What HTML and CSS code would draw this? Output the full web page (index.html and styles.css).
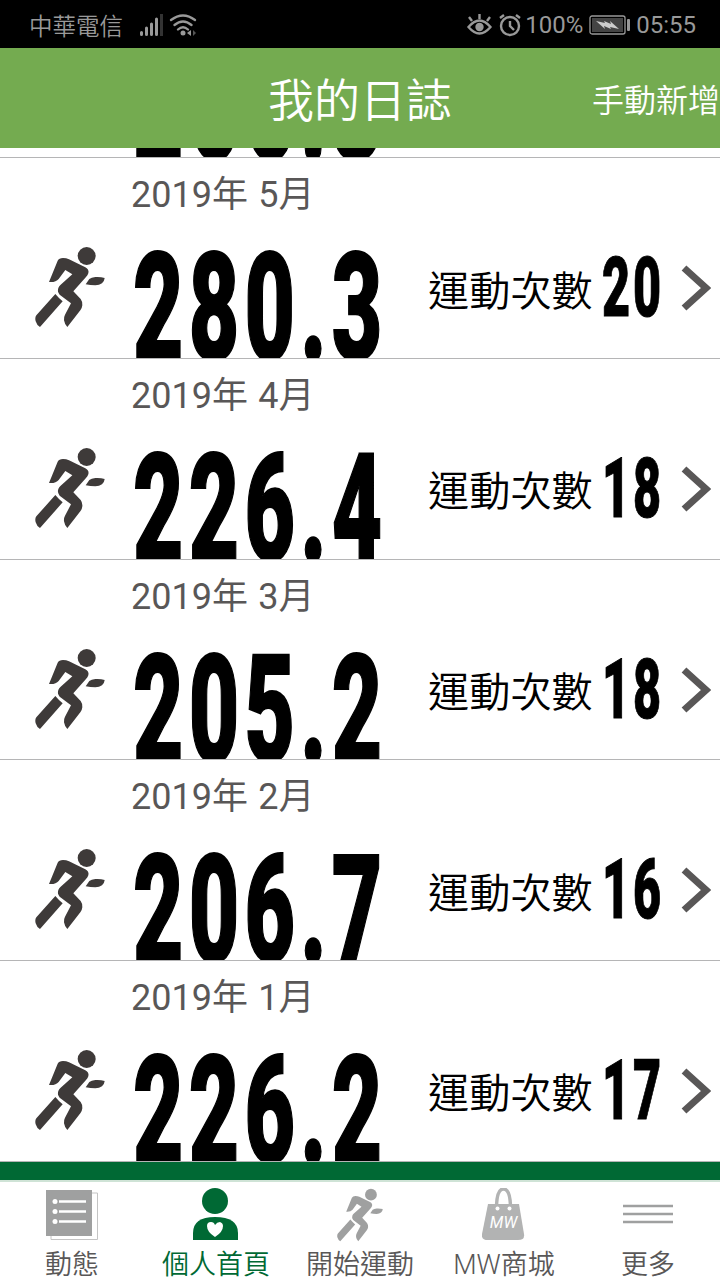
FILE: index.html
```html
<!DOCTYPE html>
<html lang="zh-Hant">
<head>
    <meta charset="UTF-8">
    <meta name="viewport" content="width=device-width, initial-scale=1.0">
    <title>我的日誌</title>
    <link rel="stylesheet" href="styles.css">
</head>
<body>
    <svg class="symbols" aria-hidden="true">
        <symbol id="runner" viewBox="45 36 210 240">
            <circle cx="200" cy="63" r="27"/>
            <path d="M113 77Q117 69 129 69Q139 69 147 73L196 97Q208 103 205 115Q203 121 198 126L160 169L182 192Q188 200 187 211Q186 220 181 226L142 276Q134 268 132 256Q131 246 135 239L153 205L119 179Q111 170 115 159Q117 153 122 149L157 118L136 105L116 132Q107 143 87 141Z"/>
            <path d="M106 177Q115 188 128 199L60 276Q50 270 47 259Q44 248 49 241Z"/>
            <path d="M197 148L208 132Q214 127 226 126Q242 125 254 129Q253 139 246 145Q238 151 226 151Q211 151 197 148Z"/>
        </symbol>
        <symbol id="chevron" viewBox="0 0 30 46">
            <path d="M3 3L25 23L3 43" fill="none" stroke="currentColor" stroke-width="7"/>
        </symbol>
    </svg>

    <div class="status-bar">
        <span class="carrier">中華電信</span>
        <svg class="signal" width="24" height="24" viewBox="0 0 24 24">
            <path d="M2.500 21.500V19.500M7.500 21.500V15M12.500 21.500V11M17.500 21.500V6" stroke="#999" stroke-width="3" stroke-linecap="round"/>
            <path d="M22.500 23V1" stroke="#333" stroke-width="3"/>
        </svg>
        <svg class="wifi" width="28" height="24" viewBox="0 0 28 24">
            <path d="M2 7Q14 -2 26 7M5.500 12Q14 5 22.500 12M9 16.500Q14 12 19 16.500" fill="none" stroke="#999" stroke-width="2.300" stroke-linecap="round"/>
            <circle cx="14" cy="20" r="2.500" fill="#999"/>
            <path d="M18 20L22 17V23Z" fill="#999"/>
            <path d="M24 17L27 20L24 23Z" fill="#555"/>
        </svg>
        <div class="status-right">
            <svg width="25" height="24" viewBox="0 0 25 24">
                <path d="M1.500 14Q12.500 1 23.500 14Q12.500 27 1.500 14ZM12.500 6V1M5 8L2 4M20 8L23 4" fill="none" stroke="#999" stroke-width="2.400"/>
                <circle cx="12.500" cy="14" r="4.200" fill="#999"/>
            </svg>
            <svg class="alarm" width="24" height="24" viewBox="0 0 24 24">
                <circle cx="12" cy="13" r="9" fill="none" stroke="#999" stroke-width="2.400"/>
                <path d="M12 8V13L16 17M2 5L6 2M22 5L18 2" fill="none" stroke="#999" stroke-width="2.400"/>
            </svg>
            <span class="percent">100%</span>
            <svg class="battery" width="42" height="20" viewBox="0 0 42 20">
                <rect x="1" y="1" width="35" height="18" rx="2" fill="#000" stroke="#999" stroke-width="1.300"/>
                <rect x="3" y="3" width="31" height="14" fill="#444"/>
                <path d="M7 6L16 8L15 6L22 9L21 6L30 14L21 12L22 14L15 11L16 14Z" fill="#ccc"/>
                <rect x="38" y="4" width="3" height="12" rx="1" fill="#999"/>
            </svg>
            <span>05:55</span>
        </div>
    </div>

    <header class="header">
        <h1>我的日誌</h1>
        <span class="add">手動新增</span>
    </header>

    <main class="list">
        <div class="row">
            <div class="month">2019年 6月</div>
            <svg class="runner"><use href="#runner"/></svg>
            <div class="distance"><span class="narrow">266.3</span></div>
            <div class="times">
                <span class="label">運動次數</span>
                <div class="count"><span class="narrow">19</span></div>
                <svg class="chevron"><use href="#chevron"/></svg>
            </div>
        </div>
        <div class="row">
            <div class="month">2019年 5月</div>
            <svg class="runner"><use href="#runner"/></svg>
            <div class="distance"><span class="narrow">280.3</span></div>
            <div class="times">
                <span class="label">運動次數</span>
                <div class="count"><span class="narrow">20</span></div>
                <svg class="chevron"><use href="#chevron"/></svg>
            </div>
        </div>
        <div class="row">
            <div class="month">2019年 4月</div>
            <svg class="runner"><use href="#runner"/></svg>
            <div class="distance"><span class="narrow">226.4</span></div>
            <div class="times">
                <span class="label">運動次數</span>
                <div class="count"><span class="narrow">18</span></div>
                <svg class="chevron"><use href="#chevron"/></svg>
            </div>
        </div>
        <div class="row">
            <div class="month">2019年 3月</div>
            <svg class="runner"><use href="#runner"/></svg>
            <div class="distance"><span class="narrow">205.2</span></div>
            <div class="times">
                <span class="label">運動次數</span>
                <div class="count"><span class="narrow">18</span></div>
                <svg class="chevron"><use href="#chevron"/></svg>
            </div>
        </div>
        <div class="row">
            <div class="month">2019年 2月</div>
            <svg class="runner"><use href="#runner"/></svg>
            <div class="distance"><span class="narrow">206.7</span></div>
            <div class="times">
                <span class="label">運動次數</span>
                <div class="count"><span class="narrow">16</span></div>
                <svg class="chevron"><use href="#chevron"/></svg>
            </div>
        </div>
        <div class="row">
            <div class="month">2019年 1月</div>
            <svg class="runner"><use href="#runner"/></svg>
            <div class="distance"><span class="narrow">226.2</span></div>
            <div class="times">
                <span class="label">運動次數</span>
                <div class="count"><span class="narrow">17</span></div>
                <svg class="chevron"><use href="#chevron"/></svg>
            </div>
        </div>
    </main>

    <div class="strip"></div>

    <nav class="tabs">
        <div class="tab">
            <svg width="54" height="54" viewBox="0 0 54 54">
                <path d="M6 5H52.500V51.500H6Z" fill="#fff" stroke="#c4c4c4"/>
                <rect x="1" y="2" width="46" height="46" fill="#9fa0a0"/>
                <path d="M14 13.500H41M14 23.500H41M14 33.500H41" stroke="#fff" stroke-width="2.500"/>
                <circle cx="10" cy="13.500" r="2.500" fill="#fff"/>
                <circle cx="10" cy="23.500" r="2.500" fill="#fff"/>
                <circle cx="10" cy="33.500" r="2.500" fill="#fff"/>
            </svg>
            <span>動態</span>
        </div>
        <div class="tab active">
            <svg width="48" height="54" viewBox="0 0 48 54">
                <circle cx="23" cy="13" r="13"/>
                <path d="M1 52V45Q1 29 23 29Q46 29 46 45V52Z"/>
                <path d="M23 49Q15 44 15 38Q15 34 19 34Q22 34 23 37Q25 34 28 34Q31 35 31 38Q31 44 23 49Z" fill="#fff"/>
            </svg>
            <span>個人首頁</span>
        </div>
        <div class="tab">
            <svg class="tab-runner"><use href="#runner"/></svg>
            <span>開始運動</span>
        </div>
        <div class="tab">
            <svg width="44" height="54" viewBox="0 0 44 54">
                <path d="M14.500 18Q15 1 21.500 1Q28 1 28.500 18" fill="none" stroke="#b2b3b3" stroke-width="3.500"/>
                <path d="M6 16H37L42 46Q43 52 36 52H6Q-1 52 0 46Z" fill="#b2b3b3"/>
                <circle cx="15.500" cy="20.500" r="2" fill="#fff"/>
                <circle cx="27.500" cy="20.500" r="2" fill="#fff"/>
                <text class="bag-text" x="21.500" y="39.500" text-anchor="middle">MW</text>
            </svg>
            <span>MW商城</span>
        </div>
        <div class="tab">
            <svg width="52" height="54" viewBox="0 0 52 54">
                <path d="M1 18H51M1 26H51M1 34H51" stroke="#9fa0a0" stroke-width="2.300"/>
            </svg>
            <span>更多</span>
        </div>
    </nav>
</body>
</html>
```
FILE: styles.css
```css
:root {
    --green: #74ab50;
    --dark-green: #006934;
    --gray: #595757;
    --icon: #9fa0a0;
}

* {
    box-sizing: border-box;
}

body {
    margin: 0;
    width: 720px;
    height: 1280px;
    overflow: hidden;
    display: flex;
    flex-direction: column;
    background: #fff;
    font-family: Roboto, "Noto Sans CJK TC", sans-serif;
    font-weight: 350;
}

svg {
    display: block;
    flex: none;
}

.symbols {
    display: none;
}

.status-bar {
    flex: none;
    height: 48px;
    padding: 2px 24px 0 29px;
    display: flex;
    align-items: center;
    background: #000;
    color: #999;
    font-size: 24px;
    font-weight: 400;
}

.carrier {
    font-size: 23.5px;
    font-weight: 350;
}

.signal {
    margin-left: 16px;
}

.wifi {
    margin-left: 6px;
}

.status-right {
    margin-left: auto;
    display: flex;
    align-items: center;
}

.alarm {
    margin-left: 6px;
}

.percent {
    margin-left: 3px;
}

.battery {
    margin: 0 5px 0 6px;
}

.header {
    flex: none;
    height: 100px;
    padding-top: 6px;
    display: grid;
    grid-template-columns: 1fr auto 1fr;
    align-items: center;
    background: var(--green);
    color: #fff;
}

h1 {
    grid-column: 2;
    margin: 0;
    line-height: 60px;
    font-size: 46px;
    font-weight: 350;
}

.add {
    justify-self: end;
    line-height: 40px;
    font-size: 32px;
}

/* scrolled to the end, so the first row is cut by the header */
.list {
    flex: none;
    height: 1013.6px;
    overflow: hidden;
    display: flex;
    flex-direction: column;
    justify-content: flex-end;
}

.row {
    flex: none;
    height: 200.67px;
    overflow: hidden;
    border-bottom: 1px solid #b5b5b6;
    display: grid;
    grid-template-columns: 35px 96px 297px 1fr;
    grid-template-rows: 72px 1fr;
}

.month {
    grid-column: 3;
    grid-row: 1;
    line-height: 75px;
    font-size: 36px;
    font-weight: 400;
    word-spacing: 1.5px;
    color: var(--gray);
}

.runner {
    grid-column: 2;
    grid-row: 2;
    width: 70px;
    height: 80px;
    margin-top: 17px;
    fill: #3e3a39;
}

.distance {
    grid-column: 3;
    grid-row: 2;
    height: 128px;
    padding-left: 2px;
    font-size: 151px;
    line-height: 157px;
}

.narrow {
    display: inline-block;
    font-weight: 900;
    letter-spacing: 0.06em;
    -webkit-text-stroke: 0.012em #000;
    transform: scaleX(0.577);
    transform-origin: left;
}

.times {
    grid-column: 4;
    grid-row: 2;
    height: 116px;
    display: flex;
    align-items: center;
}

.label {
    width: 173px;
    line-height: 56px;
    padding-top: 7px;
    font-size: 41.2px;
    white-space: nowrap;
}

.count {
    width: 80px;
    padding-left: 1px;
    font-size: 84px;
    line-height: 84px;
}

.chevron {
    width: 30px;
    height: 46px;
    color: var(--gray);
}

.strip {
    flex: none;
    height: 18.4px;
    background: var(--dark-green);
}

.tabs {
    flex: 1;
    display: grid;
    grid-template-columns: repeat(5, 1fr);
    border-top: 2px solid #cfe3d6;
}

.tab {
    padding-top: 6px;
    display: flex;
    flex-direction: column;
    align-items: center;
    color: var(--gray);
    font-size: 27px;
    line-height: 46px;
}

.tab span {
    white-space: nowrap;
}

.tab.active {
    color: var(--dark-green);
    fill: var(--dark-green);
}

.tab-runner {
    width: 46px;
    height: 54px;
    fill: var(--icon);
}

.bag-text {
    font-size: 16px;
    font-style: italic;
    font-weight: 400;
    fill: #fff;
}
```
